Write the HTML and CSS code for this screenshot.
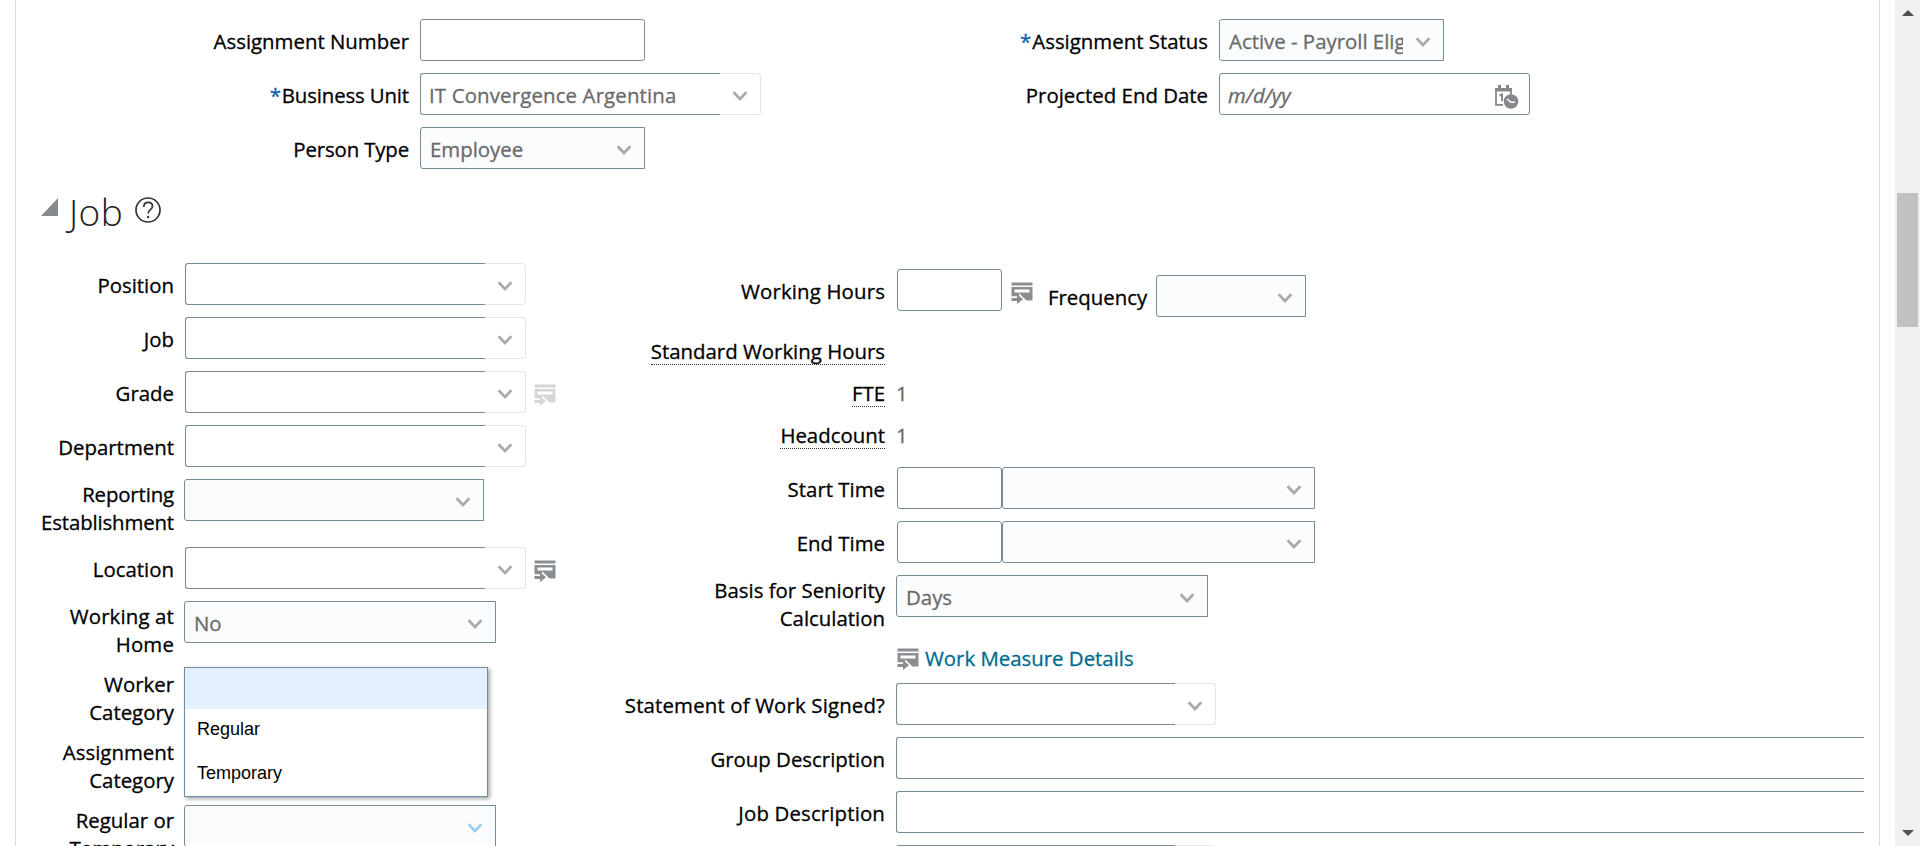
FILE: index.html
```html
<!DOCTYPE html>
<html lang="en">
<head>
<meta charset="utf-8">
<title>Employment Information</title>
<link rel="stylesheet" href="styles.css">
</head>
<body>
<svg class="defs" aria-hidden="true">
  <symbol id="chev" viewBox="0 0 16 10"><path d="M1.6 1.2 8 8 14.4 1.2" fill="none" stroke="currentColor" stroke-width="2.7"/></symbol>
  <symbol id="detail" viewBox="0 0 22 22"><path fill="currentColor" d="M0.5 0.5h21v3h-21z"/><path fill="currentColor" fill-rule="evenodd" d="M0.5 5h21V18.500h-6L8 11.200v3H0.500zM3.500 7.500v3h15v-3z"/><path fill="currentColor" d="M0.500 16h5.500v-4l6 5.200-6 4.800v-3H0.500z"/></symbol>
</svg>
<div class="app">
  <main class="panel">
    <section class="top">
      <div class="col top-a">
        <div class="row"><label class="label">Assignment Number</label><div class="input w225"></div></div>
        <div class="row"><label class="label snug"><span class="req">*</span>Business Unit</label><div class="lov"><div class="lov-text w300 loose">IT Convergence Argentina</div><div class="lov-btn"><svg class="chev"><use href="#chev"/></svg></div></div></div>
        <div class="row"><label class="label snug">Person Type</label><div class="select w225"><span class="value">Employee</span><svg class="chev"><use href="#chev"/></svg></div></div>
      </div>
      <div class="col top-b">
        <div class="row"><label class="label"><span class="req">*</span>Assignment Status</label><div class="select w225"><span class="value">Active - Payroll Eligible</span><svg class="chev"><use href="#chev"/></svg></div></div>
        <div class="row"><label class="label">Projected End Date</label><div class="input date"><span class="hint">m/d/yy</span>
          <svg class="cal" viewBox="0 0 25 25"><path d="M2 5.500v15.300h7M17 5.500v6" fill="none" stroke="currentColor" stroke-width="1.800"/><path d="M1 4h17v3.500H1zM4 1h3v5H4zM12 1h3v5h-3z" fill="currentColor"/><path d="M5.500 11.500 8 10.500V17" fill="none" stroke="currentColor" stroke-width="2"/><circle cx="17" cy="17.500" r="7.300" fill="currentColor"/><path d="M13 15l4 3.200h4" fill="none" stroke="#fff" stroke-width="1.500"/></svg></div></div>
      </div>
    </section>

    <header class="heading">
      <svg class="tri" viewBox="0 0 17 18"><path d="M17 0v18H0z" fill="#878b90"/></svg>
      <h1>Job</h1>
      <svg class="help" viewBox="0 0 26 26"><circle cx="13" cy="13" r="12" fill="none" stroke="#333" stroke-width="1.700"/><path d="M8.800 10c0-3 2-4.600 4.400-4.600s4.300 1.500 4.300 3.900c0 3.300-4.300 3.600-4.300 7.200" fill="none" stroke="#333" stroke-width="1.700"/><circle cx="13.100" cy="20" r="1.200" fill="#333"/></svg>
    </header>

    <section class="job">
      <div class="col job-a">
        <div class="row"><label class="label">Position</label><div class="lov"><div class="lov-text w300"></div><div class="lov-btn"><svg class="chev"><use href="#chev"/></svg></div></div></div>
        <div class="row"><label class="label">Job</label><div class="lov"><div class="lov-text w300"></div><div class="lov-btn"><svg class="chev"><use href="#chev"/></svg></div></div></div>
        <div class="row"><label class="label">Grade</label><div class="lov"><div class="lov-text w300"></div><div class="lov-btn"><svg class="chev"><use href="#chev"/></svg></div></div><svg class="detail off"><use href="#detail"/></svg></div>
        <div class="row"><label class="label">Department</label><div class="lov"><div class="lov-text w300"></div><div class="lov-btn"><svg class="chev"><use href="#chev"/></svg></div></div></div>
        <div class="row"><label class="label two snug">Reporting<br>Establishment</label><div class="select edge w300"><svg class="chev"><use href="#chev"/></svg></div></div>
        <div class="row"><label class="label">Location</label><div class="lov"><div class="lov-text w300"></div><div class="lov-btn"><svg class="chev"><use href="#chev"/></svg></div></div><svg class="detail"><use href="#detail"/></svg></div>
        <div class="row"><label class="label two loose">Working at<br>Home</label><div class="select edge w312"><span class="value">No</span><svg class="chev"><use href="#chev"/></svg></div></div>
        <div class="row anchor"><label class="label two">Worker<br>Category</label>
          <ul class="menu"><li class="active"></li><li>Regular</li><li>Temporary</li></ul></div>
        <div class="row"><label class="label two">Assignment<br>Category</label></div>
        <div class="row"><label class="label two">Regular or<br>Temporary</label><div class="select edge w312"><svg class="chev blue"><use href="#chev"/></svg></div></div>
      </div>

      <div class="col job-b">
        <div class="row hours"><label class="label loose">Working Hours</label><div class="input w105"></div><svg class="detail"><use href="#detail"/></svg><div class="freq"><label class="label">Frequency</label><div class="select w150"><svg class="chev"><use href="#chev"/></svg></div></div></div>
        <div class="row fact"><label class="label"><span class="dotted">Standard Working Hours</span></label></div>
        <div class="row fact"><label class="label"><span class="dotted">FTE</span></label><span class="num">1</span></div>
        <div class="row fact last"><label class="label"><span class="dotted">Headcount</span></label><span class="num">1</span></div>
        <div class="row"><label class="label">Start Time</label><div class="input w105"></div><div class="select w313"><svg class="chev"><use href="#chev"/></svg></div></div>
        <div class="row"><label class="label">End Time</label><div class="input w105"></div><div class="select w313"><svg class="chev"><use href="#chev"/></svg></div></div>
        <div class="row"><label class="label two">Basis for Seniority<br>Calculation</label><div class="select edge w312"><span class="value">Days</span><svg class="chev"><use href="#chev"/></svg></div></div>
        <div class="row measure"><label class="label"></label><svg class="detail"><use href="#detail"/></svg><a class="link">Work Measure Details</a></div>
        <div class="row"><label class="label loose">Statement of Work Signed?</label><div class="lov edge"><div class="lov-text w279"></div><div class="lov-btn"><svg class="chev"><use href="#chev"/></svg></div></div></div>
        <div class="row"><label class="label">Group Description</label><div class="input edge wide"></div></div>
        <div class="row"><label class="label loose">Job Description</label><div class="input edge wide"></div></div>
        <div class="row"><label class="label"></label><div class="lov edge"><div class="lov-text w279"></div><div class="lov-btn"></div></div></div>
      </div>
    </section>
  </main>
  <aside class="scroll"><i class="up"></i><i class="thumb"></i><i class="down"></i></aside>
</div>
</body>
</html>
```
FILE: styles.css
```css
* { box-sizing: border-box; }
html, body { margin: 0; height: 846px; overflow: hidden; background: #fff; }
body { font-family: "Open Sans", "Noto Sans", sans-serif; font-size: 20.4px; -webkit-text-stroke: 0.3px currentColor; line-height: 28px; color: #000; }
.defs { display: none; }
.app { display: flex; height: 846px; overflow: hidden; }
.panel { flex: none; width: 1865px; margin-left: 15px; height: 846px; overflow: hidden; border-left: 1px solid #d3dde6; border-right: 1px solid #d3dde6; }
.top { display: flex; height: 169px; padding-top: 19px; }
.col { display: flex; flex-direction: column; gap: 12px; }
.row { display: flex; align-items: flex-start; flex: none; }
.label { flex: none; padding-top: 8px; margin-right: 11px; text-align: right; white-space: nowrap; }
.label.two { padding-top: 1px; margin-bottom: -1px; }
.snug { letter-spacing: -0.14px; }
.loose { letter-spacing: 0.15px; }
.top-a { width: 800px; }
.top-a > .row > .label { width: 393px; }
.top-b > .row > .label { width: 392px; }
.req { color: #0b62ad; margin-right: 1px; }

.input, .select, .lov-text, .lov-btn { height: 42px; border: 1px solid #768c99; background: #fff; flex: none; display: flex; align-items: flex-start; }
.input { border-radius: 3px; }
.select { border-radius: 3px 0 0 3px; background: #fbfcfe; padding: 0 12px 0 9px; justify-content: space-between; color: #6a6a6a; }
.value { flex: 1; min-width: 0; overflow: hidden; white-space: nowrap; padding-top: 7px; margin-right: 12px; }
.select .chev { margin-left: auto; }
.edge { margin-left: -1px; }
.lov { display: flex; flex: none; }
.lov-text { border-right: 0; border-radius: 3px 0 0 3px; padding: 7px 0 0 8px; color: #6a6a6a; white-space: nowrap; }
.lov-btn { width: 41px; border-color: #dfe7ea; border-left: 0; border-radius: 0 4px 4px 0; padding-left: 12px; }
.chev { flex: none; width: 16px; height: 10px; margin-top: 17px; color: #a8abae; }
.chev.blue { color: #9fcdf0; }
.w105 { width: 105px; }
.w150 { width: 150px; }
.w225 { width: 225px; }
.w279 { width: 279px; }
.w300 { width: 300px; }
.w312 { width: 312px; }
.w313 { width: 313px; }
.wide { width: 968px; border-right: 0; border-radius: 3px 0 0 3px; }
.date { width: 311px; padding: 0 10px 0 8px; justify-content: space-between; }
.hint { padding-top: 7px; font-style: italic; color: #6a6a6a; }
.cal { width: 25px; height: 25px; margin-top: 10px; color: #85898d; }

.heading { display: flex; align-items: flex-start; height: 94px; padding: 16px 0 0 25px; }
.tri { width: 17px; height: 18px; margin-top: 13px; }
h1 { margin: 2px 0 0 11px; width: 66px; font-size: 37px; line-height: 50px; font-weight: 300; letter-spacing: 0.5px; color: #222; -webkit-text-stroke: 0; }
.help { width: 26px; height: 26px; margin-top: 12px; }

.job { display: flex; align-items: flex-start; }
.job-a { width: 570px; }
.job-a > .row > .label { width: 158px; }
.job-b > .row > .label { width: 299px; margin-right: 12px; }
.detail { flex: none; width: 22px; height: 22px; margin: 13px 0 0 8px; color: #8a8d91; }
.detail.off { color: #d5d6d8; }
.anchor { position: relative; }
.menu { position: absolute; left: 168px; top: -2px; z-index: 2; width: 304px; height: 130px; margin: 0; padding: 0; list-style: none; border: 1px solid #6e8da5; background: #fff; box-shadow: 2px 2px 4px rgba(0,0,0,.35); font: 400 18px/40px "Liberation Sans", Arial, sans-serif; -webkit-text-stroke: 0; }
.menu li { height: 44px; padding-left: 12px; }
.menu .active { height: 41px; background: #e3f0fe; }

.job-b { padding-top: 6px; }
.hours { height: 48px; }
.hours > .detail { margin-left: 9px; }
.freq { display: flex; margin: 6px 0 0 15px; }
.freq .label { width: 98px; margin-right: 10px; }
.fact { height: 30px; }
.fact.last { height: 42px; }
.dotted { display: inline-block; height: 28px; border-bottom: 1px dotted #333; }
.num { padding-top: 8px; margin-left: -1px; color: #6a6a6a; }
.measure { height: 28px; }
.measure .detail { margin: 5px 0 0; }
.link { margin-left: 6px; padding-top: 1px; color: #006b8f; }

.scroll { flex: none; width: 25px; margin-left: 15px; background: #f0f0f0; display: flex; flex-direction: column; align-items: center; padding: 10px 0; }
.up { border: 6px solid transparent; border-top: 0; border-bottom-color: #505050; }
.down { border: 6px solid transparent; border-bottom: 0; border-top-color: #505050; margin-top: auto; }
.thumb { width: 21px; height: 134px; margin-top: 177px; background: #c1c1c1; }
```
